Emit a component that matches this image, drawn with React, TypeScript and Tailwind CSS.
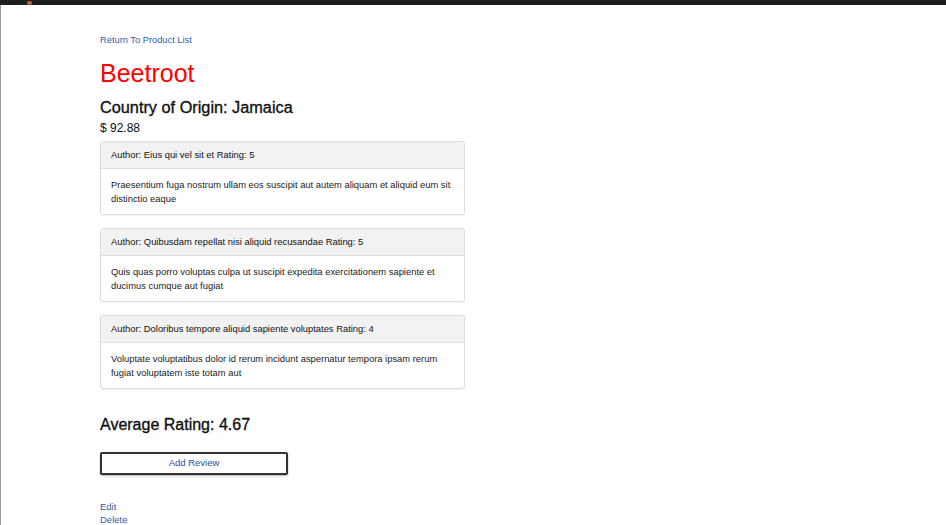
import React from "react";

const reviews = [
  {
    author: "Eius qui vel sit et",
    rating: 5,
    text: "Praesentium fuga nostrum ullam eos suscipit aut autem aliquam et aliquid eum sit distinctio eaque",
  },
  {
    author: "Quibusdam repellat nisi aliquid recusandae",
    rating: 5,
    text: "Quis quas porro voluptas culpa ut suscipit expedita exercitationem sapiente et ducimus cumque aut fugiat",
  },
  {
    author: "Doloribus tempore aliquid sapiente voluptates",
    rating: 4,
    text: "Voluptate voluptatibus dolor id rerum incidunt aspernatur tempora ipsam rerum fugiat voluptatem iste totam aut",
  },
];

export default function App() {
  return (
    <div
      className="w-[946px] h-[525px] bg-white overflow-hidden flex flex-col text-[#111]"
      style={{ fontFamily: '"Liberation Sans", Arial, sans-serif' }}
    >
      <div className="h-[5px] bg-[#1d1d1d] relative shrink-0">
        <div className="absolute left-[27px] top-[1px] w-[5px] h-[4px] rounded-full bg-[#c0622a]" />
      </div>
      <div className="flex-1 border-l border-[#9a9a9a] pl-[99px] pt-[29px]">
        <a className="block text-[9.3px] leading-[13px] text-[#3360aa]">Return To Product List</a>
        <h1 className="mt-[12px] text-[25px] leading-[28px] text-[#ff0000]">Beetroot</h1>
        <h2 className="mt-[10px] text-[16.3px] leading-[20px] [-webkit-text-stroke:0.35px_#111]">Country of Origin: Jamaica</h2>
        <div className="mt-[4px] text-[12px] leading-[15px]">$ 92.88</div>
        <div className="mt-[5px] w-[365px] flex flex-col gap-[13px]">
          {reviews.map((r, i) => (
            <div
              key={i}
              className="border border-[#dcdcdc] rounded-[3px] shadow-[0_1px_1px_rgba(0,0,0,0.05)] overflow-hidden"
            >
              <div className="h-[27px] bg-[#f2f2f2] border-b border-[#dddddd] px-[10px] flex items-center text-[9.4px]">
                Author: {r.author} Rating: {r.rating}
              </div>
              <div className="px-[10px] pt-[9px] pb-[8px] text-[9.4px] leading-[14px] text-[#222]">{r.text}</div>
            </div>
          ))}
        </div>
        <div className="mt-[26px] text-[16px] leading-[20px] [-webkit-text-stroke:0.35px_#111]">Average Rating: 4.67</div>
        <button className="mt-[17px] w-[188px] h-[23px] border-2 border-[#333] rounded-[2px] bg-white shadow-[0_1px_2px_rgba(0,0,0,0.3)] text-[9.5px] text-[#2a4fa0] flex items-center justify-center">
          Add Review
        </button>
        <a className="block mt-[25px] text-[9.5px] leading-[13px] text-[#3360aa]">Edit</a>
        <a className="block text-[9.5px] leading-[13px] text-[#3360aa]">Delete</a>
      </div>
    </div>
  );
}
